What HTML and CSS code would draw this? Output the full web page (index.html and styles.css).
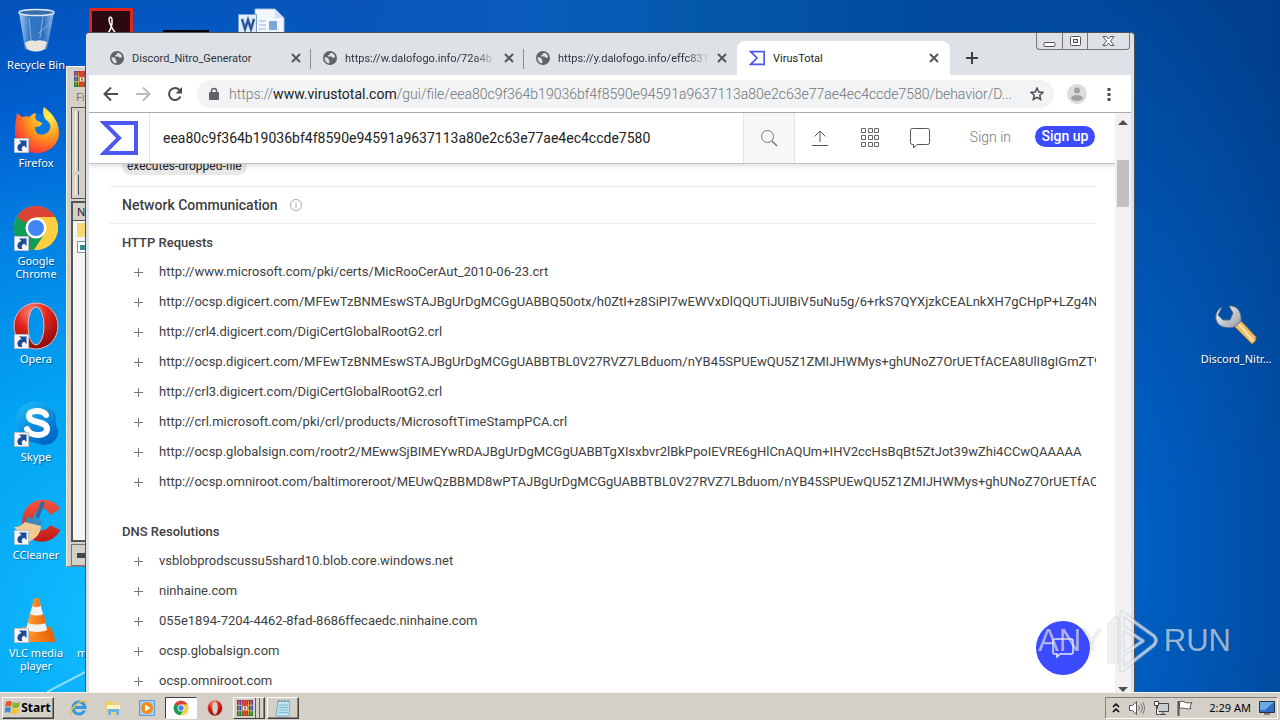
FILE: index.html
```html
<!DOCTYPE html>
<html lang="en">
<head>
<meta charset="utf-8">
<title>VirusTotal</title>
<link rel="stylesheet" href="styles.css">
</head>
<body>
<svg class="defs" aria-hidden="true">
  <defs>
    <linearGradient id="gBin" x1="0" x2="1"><stop offset="0" stop-color="#d6ebfa"/><stop offset=".3" stop-color="#3d7fc6"/><stop offset=".7" stop-color="#3a78c0"/><stop offset="1" stop-color="#b5d6ef"/></linearGradient>
    <radialGradient id="gFox" cx=".75" cy=".2" r="1"><stop offset="0" stop-color="#fff44f"/><stop offset=".45" stop-color="#ff9a1e"/><stop offset=".8" stop-color="#ff4130"/><stop offset="1" stop-color="#e31587"/></radialGradient>
    <radialGradient id="gOpera" cx=".4" cy=".2" r=".9"><stop offset="0" stop-color="#ff8a7a"/><stop offset=".4" stop-color="#e0241c"/><stop offset="1" stop-color="#7d0508"/></radialGradient>
    <linearGradient id="gSkype" x2=".6" y2="1"><stop offset="0" stop-color="#1ec0ff"/><stop offset="1" stop-color="#0068c8"/></linearGradient>
    <linearGradient id="gCc" x2="0" y2="1"><stop offset="0" stop-color="#f0563f"/><stop offset="1" stop-color="#c11a17"/></linearGradient>
    <linearGradient id="gCone" x2="1"><stop offset="0" stop-color="#ffa63a"/><stop offset="1" stop-color="#e85e00"/></linearGradient>
    <linearGradient id="gWrench" x2="1" y2="1"><stop offset="0" stop-color="#fff"/><stop offset="1" stop-color="#8f9aa8"/></linearGradient>
  </defs>
  <symbol id="chrome" viewBox="0 0 48 48">
    <circle cx="24" cy="24" r="22" fill="#ffcd40"/>
    <path d="M24 24 4.950 13A22 22 0 0 1 43.050 13Z" fill="#db4437"/>
    <path d="M4.950 13A22 22 0 0 0 22 46L33 29 24 24Z" fill="#0f9d58"/>
    <path d="M4.950 13 15 30 24 24 14 13Z" fill="#0f9d58"/>
    <path d="M24 13H43.050A22 22 0 0 1 22 46L33.500 29.500Z" fill="#ffcd40"/>
    <path d="M4.950 13A22 22 0 0 1 43.050 13H24A11 11 0 0 0 14 19Z" fill="#db4437"/>
    <circle cx="24" cy="24" r="10.500" fill="#fff"/><circle cx="24" cy="24" r="8" fill="#4285f4"/>
  </symbol>
  <symbol id="opera" viewBox="0 0 48 48">
    <path fill-rule="evenodd" d="M24 1a22 23 0 0 0 0 46 22 23 0 0 0 0-46zM24 5a8 19 0 0 1 0 38 8 19 0 0 1 0-38z" fill="url(#gOpera)" stroke="#f0b8b4" stroke-width="1"/>
  </symbol>
  <symbol id="rar" viewBox="0 0 20 20">
    <path fill="#7a2f86" d="M0 0h20v6H0z"/><path fill="#2c4aa8" d="M0 7h20v6H0z"/><path fill="#1c7a34" d="M0 14h20v6H0z"/>
    <path fill="#d8442c" d="M7 0h6v20H7z"/><path fill="#e8b83c" d="M2 1h1v18H2zM17 1h1v18h-1zM5 1h1v18H5zM14 1h1v18h-1z"/>
    <path fill="#fff3c8" d="M7 8h6v5H7z"/><path fill="#7b4a12" d="M9 9h2v3H9z"/>
  </symbol>
  <symbol id="globe" viewBox="0 0 14 14">
    <circle cx="7" cy="7" r="7" fill="#5f6368"/>
    <path fill="#dee1e6" d="M8.500 1.800c-1 .5-2 .6-2 1.600 0 .8-1.500.3-1.500 1.500 0 .8 1.500.4 3 .5 1.300 0 1 1.400 2.200 1.400 1 0 1.200-.8 2-.8A5.500 5.500 0 0 0 8.500 1.800zM1.500 6.300C2.500 6.500 4 6.400 5 7c1.200.7 0 1.600 1 2.200 1 .5.900 1.300.2 2.100-.3.500-.1 1 .3 1.200A5.600 5.600 0 0 1 1.500 6.300z"/>
  </symbol>
  <symbol id="sigma" viewBox="0 0 38 34"><path d="M4 2H36V32H4L19 17Z" fill="none" stroke="#4d58f0" stroke-width="4"/></symbol>
  <symbol id="x" viewBox="0 0 10 10"><path d="M1 1 9 9M9 1 1 9" stroke="#54585c" stroke-width="2" fill="none"/></symbol>
  <symbol id="arrow" viewBox="0 0 15 15">
    <path d="M.500.500h14v14H.500z" fill="#f4f6f8" stroke="#b9c0c8"/>
    <path d="M5 2.500h7.500V10l-2.300-2.300C8 8.500 7 10.500 8.500 13H5C2 10 3.500 6 7.500 5Z" fill="#1d4b95"/>
  </symbol>
</svg>

<main class="desktop">
  <div class="icons">
    <div class="icon c1 r1">
      <svg width="48" height="48" viewBox="0 0 48 48"><path d="M7 4 13 41Q24 47 35 41L42 4Z" fill="url(#gBin)" opacity=".8"/><ellipse cx="24.500" cy="4.500" rx="17.500" ry="3" fill="#3a6dab" stroke="#dcebf6" stroke-width="1.500"/><path d="M13 35q5-4 10-2 6-2 12 1l-2 7q-9 5-18 0z" fill="#e9e6df"/><path d="M17 10l2 22M31 8l-3 22M38 15 26 26" stroke="#a5cbe9" stroke-width="1" fill="none" opacity=".7"/></svg>
      <span>Recycle Bin</span>
    </div>
    <div class="icon c1 r2">
      <svg width="48" height="48" viewBox="0 0 48 48"><circle cx="25" cy="25" r="17" fill="#0a78e0"/><path d="M32 1c5 4 15 12 15 26a22 20 0 0 1-44 0C3 18 4 12 5 7l5 4c3-1 6-1 8 0 2-3 4-4 6-4-1 3-1 5 0 7l6 3c0 3-4 4-7 4 0 7 5 9 10 7 7-3 7-11 1-14-3-5-4-9-2-13z" fill="url(#gFox)"/></svg>
      <svg class="badge" width="15" height="15"><use href="#arrow"/></svg>
      <span>Firefox</span>
    </div>
    <div class="icon c1 r3"><svg width="48" height="48"><use href="#chrome"/></svg><svg class="badge" width="15" height="15"><use href="#arrow"/></svg><span>Google Chrome</span></div>
    <div class="icon c1 r4"><svg width="48" height="48"><use href="#opera"/></svg><svg class="badge" width="15" height="15"><use href="#arrow"/></svg><span>Opera</span></div>
    <div class="icon c1 r5">
      <svg width="48" height="48" viewBox="0 0 48 48"><path d="M15 4C22-1 34 2 39 9c6 2 5 10 5 16 4 6 2 14-4 18-6 3-12 2-16 0C12 42 6 34 6 26 2 16 6 7 15 4z" fill="url(#gSkype)"/><path d="M34 15c-2-5-17-6-17 1 0 8 18 4 18 13 0 8-17 8-20 0" fill="none" stroke="#fff" stroke-width="6" stroke-linecap="round"/></svg>
      <svg class="badge" width="15" height="15"><use href="#arrow"/></svg>
      <span>Skype</span>
    </div>
    <div class="icon c1 r6">
      <svg width="48" height="48" viewBox="0 0 48 48"><path d="M48 11C42 0 26-1 17 7c-9 9-9 24 0 32s25 6 31-7l-10-5c-3 7-13 7-16 1s1-16 7-17 7 2 9 6z" fill="url(#gCc)"/><path d="M31 4 25 20" stroke="#2e6da4" stroke-width="4"/><path d="M15 19l15 3-1 6-16-4z" fill="#3b87c2"/><path d="M13 24l16 4c0 7-5 13-13 16L2 29c5 0 8-2 11-5z" fill="#f1cb92"/></svg>
      <svg class="badge" width="15" height="15"><use href="#arrow"/></svg>
      <span>CCleaner</span>
    </div>
    <div class="icon c1 r7">
      <svg width="48" height="48" viewBox="0 0 48 48"><path d="M10 31h29l5 15H4z" fill="url(#gCone)"/><path d="M22 3q2.500-2 5 0l9 34q-12 6-23 0z" fill="#f4f2ee"/><path d="M22 3q2.500-2 5 0l2 7q-4.500 2-9 0zM18 18q7 3 13.500 0l2.500 9q-9 3-18.500 0zM14 34q11 4 22 0l1 4q-12 6-24 0z" fill="url(#gCone)"/></svg>
      <svg class="badge" width="15" height="15"><use href="#arrow"/></svg>
      <span>VLC media player</span>
    </div>
    <div class="icon c2 r1"><svg width="44" height="48" viewBox="0 0 44 48"><path d="M1.500 1.500h41v45h-41z" fill="#2a0a10" stroke="#e1251b" stroke-width="3"/><path d="M17 28q7-8 6-17-2-4-3 0 0 6 8 16" fill="none" stroke="#fff" stroke-width="1.500"/></svg></div>
    <div class="icon c3 r1 low"><svg width="46" height="20"><path d="M0 0h46v20H0z" fill="#000"/></svg></div>
    <div class="icon c4 r1">
      <svg width="48" height="48" viewBox="0 0 48 48"><path d="M18 1h20l9 9v37H18z" fill="#f2f7fd" stroke="#9dbbe0"/><path d="M38 1v9h9" fill="#cfe0f4"/><path d="M22 13h7M22 17h7M22 21h7" stroke="#9bb4d4"/><path d="M32 13h8v9h-8z" fill="#7da7dc"/><path d="M1.500 6.500h18v19h-18z" fill="#dfeafa" stroke="#7f9fd0"/><path d="M5 11l3 10 3-9 3 9 3-10" fill="none" stroke="#2b579a" stroke-width="2.500"/></svg>
    </div>
    <div class="icon c2 r7 start"><svg width="48" height="48"></svg><span>m</span></div>
    <div class="icon c6 r4">
      <svg width="48" height="48" viewBox="0 0 48 48"><path d="M22 24l7-5 15 16q1 4-4 7z" fill="#e9bd6a" stroke="#a87830"/><path d="M27 22l14 17" stroke="#ffe2a0" stroke-width="2"/><path d="M10 5C1 10 2 23 12 25c4 1 7 1 10 0l7-6C30 10 25 3 17 4l4 7-3 7-7 0-5-5z" fill="url(#gWrench)" stroke="#5f6b7a"/></svg>
      <span>Discord_Nitr…</span>
    </div>
  </div>

  <section class="rarwin">
    <svg class="rar-icon" width="20" height="16"><use href="#rar"/></svg>
    <div class="rar-menu">Fil</div>
    <div class="rar-tools"><i></i><i></i></div>
    <div class="rar-list">
      <div class="rar-head">N</div>
      <svg width="16" height="36" viewBox="0 0 16 36"><path d="M4 2h10v14H4z" fill="#f3d873"/><path d="M4.500 20.500h11v11h-11z" fill="#fff" stroke="#6f97b5"/><path d="M7 24h5v5H7z" fill="#3a8a8c"/></svg>
    </div>
    <div class="rar-status"><i></i></div>
  </section>

  <section class="browser">
    <div class="tabstrip">
      <div class="tabs">
        <div class="tab"><svg width="14" height="14"><use href="#globe"/></svg><span>Discord_Nitro_Generator</span><button aria-label="Close tab"><svg width="10" height="10"><use href="#x"/></svg></button></div>
        <div class="tab"><svg width="14" height="14"><use href="#globe"/></svg><span class="fade">https://w.dalofogo.info/72a4b</span><button aria-label="Close tab"><svg width="10" height="10"><use href="#x"/></svg></button></div>
        <div class="tab last"><svg width="14" height="14"><use href="#globe"/></svg><span class="fade">https://y.dalofogo.info/effc831</span><button aria-label="Close tab"><svg width="10" height="10"><use href="#x"/></svg></button></div>
        <div class="tab active"><svg width="16" height="16"><use href="#sigma"/></svg><span>VirusTotal</span><button aria-label="Close tab"><svg width="10" height="10"><use href="#x"/></svg></button></div>
        <button class="newtab" aria-label="New tab"><svg width="12" height="12" viewBox="0 0 12 12"><path d="M6 0v12M0 6h12" stroke="#3c4043" stroke-width="2"/></svg></button>
      </div>
      <div class="winctl">
        <button aria-label="Minimize"><svg width="13" height="16" viewBox="0 0 13 16"><rect x="1" y="9.500" width="11" height="4" rx="1" fill="#fff" stroke="#555"/></svg></button>
        <button aria-label="Maximize"><svg width="13" height="16" viewBox="0 0 13 16"><rect x="1.500" y="3.500" width="10" height="9" rx="1" fill="#fff" stroke="#555"/><rect x="4.500" y="6.500" width="4" height="3" fill="#dee1e6" stroke="#555"/></svg></button>
        <button class="wide" aria-label="Close"><svg width="13" height="16" viewBox="0 0 13 16"><path d="M1 3.500h3.500l2 2.500 2-2.500H12L8.500 8l3.500 4.500H8.500l-2-2.500-2 2.500H1L4.500 8z" fill="#fff" stroke="#555"/></svg></button>
      </div>
    </div>

    <div class="toolbar">
      <button aria-label="Back"><svg width="16" height="16" viewBox="0 0 16 16"><path d="M15 8H2M8 1.500 1.500 8 8 14.500" fill="none" stroke="#4a4e52" stroke-width="2"/></svg></button>
      <button aria-label="Forward"><svg width="16" height="16" viewBox="0 0 16 16"><path d="M1 8h13M8 1.500 14.500 8 8 14.500" fill="none" stroke="#b8babd" stroke-width="2"/></svg></button>
      <button aria-label="Reload"><svg width="16" height="16" viewBox="0 0 16 16"><path d="M13.500 10.500A6 6 0 1 1 12.500 4" fill="none" stroke="#4a4e52" stroke-width="2"/><path d="M15 1v6.500H8.500z" fill="#4a4e52"/></svg></button>
      <div class="omnibox">
        <svg width="10" height="14" viewBox="0 0 10 14"><path d="M1 5h8q1 0 1 1v6q0 1-1 1H1q-1 0-1-1V6q0-1 1-1z" fill="#5f6368"/><path d="M2.500 5.500V4a2.500 2.500 0 0 1 5 0v1.500" fill="none" stroke="#5f6368" stroke-width="1.500"/></svg>
        <div class="url" role="textbox" aria-label="Address">https://<b>www.virustotal.com</b>/gui/file/eea80c9f364b19036bf4f8590e94591a9637113a80e2c63e77ae4ec4ccde7580/behavior/D...</div>
        <svg width="14" height="14" viewBox="0 0 14 14"><path d="M7 1l1.800 4 4.200.4-3.200 2.900.9 4.200L7 10.300l-3.700 2.200.9-4.200L1 5.400 5.200 5z" fill="none" stroke="#4a4e52" stroke-width="1.500"/></svg>
      </div>
      <button class="avatar" aria-label="Profile"><svg width="20" height="20" viewBox="0 0 20 20"><circle cx="10" cy="10" r="10" fill="#dcdcdc"/><circle cx="10" cy="6.500" r="3" fill="#a0a0a0"/><ellipse cx="10" cy="14" rx="6" ry="3" fill="#a0a0a0"/></svg></button>
      <button aria-label="Menu"><svg width="4" height="14" viewBox="0 0 4 14"><path d="M.500 1h3v3h-3zM.500 6h3v3h-3zM.500 11h3v3h-3z" fill="#4a4e52"/></svg></button>
    </div>

    <div class="viewport">
      <div class="page">
        <header class="vt-head">
          <a class="vt-logo" href="#" aria-label="VirusTotal"><svg width="38" height="34"><use href="#sigma"/></svg></a>
          <input class="vt-search" type="text" aria-label="Search" value="eea80c9f364b19036bf4f8590e94591a9637113a80e2c63e77ae4ec4ccde7580">
          <button class="vt-go" aria-label="Search"><svg width="18" height="18" viewBox="0 0 18 18"><circle cx="7.500" cy="7.500" r="6" fill="none" stroke="#777"/><path d="M12 12l5 5" stroke="#777" stroke-width="1.500"/></svg></button>
          <nav class="vt-nav">
            <button aria-label="Upload"><svg width="16" height="16" viewBox="0 0 16 16"><path d="M8 12V1.500M2.500 6.500 8 1l5.500 5.500M0 15.500h16" fill="none" stroke="#555"/></svg></button>
            <button aria-label="Apps"><svg width="20" height="20" viewBox="0 0 20 20"><path d="M1.500.500h4v4h-4zM8.500.500h4v4h-4zM14.500.500h4v4h-4zM1.500 7.500h4v4h-4zM8.500 7.500h4v4h-4zM14.500 7.500h4v4h-4zM1.500 14.500h4v4h-4zM8.500 14.500h4v4h-4zM14.500 14.500h4v4h-4z" fill="none" stroke="#666"/></svg></button>
            <button aria-label="Comments"><svg width="20" height="20" viewBox="0 0 20 20"><path d="M2.500.500h15q2 0 2 2v12q0 2-2 2H7L3.500 20v-3.500H2.500q-2 0-2-2v-12q0-2 2-2z" fill="none" stroke="#555"/></svg></button>
          </nav>
          <a class="signin" href="#">Sign in</a>
          <a class="signup" href="#">Sign up</a>
        </header>
        <div class="vt-body">
          <span class="chip">executes-dropped-file</span>
          <h2>Network Communication <svg width="12" height="12" viewBox="0 0 12 12"><circle cx="6" cy="6" r="5.500" fill="none" stroke="#aaa"/><path d="M6 3v1M6 5v4" stroke="#aaa"/></svg></h2>
          <h3>HTTP Requests</h3>
          <ul>
            <li>http://www.microsoft.com/pki/certs/MicRooCerAut_2010-06-23.crt</li>
            <li>http://ocsp.digicert.com/MFEwTzBNMEswSTAJBgUrDgMCGgUABBQ50otx/h0ZtI+z8SiPI7wEWVxDlQQUTiJUIBiV5uNu5g/6+rkS7QYXjzkCEALnkXH7gCHpP+LZg4N</li>
            <li>http://crl4.digicert.com/DigiCertGlobalRootG2.crl</li>
            <li>http://ocsp.digicert.com/MFEwTzBNMEswSTAJBgUrDgMCGgUABBTBL0V27RVZ7LBduom/nYB45SPUEwQU5Z1ZMIJHWMys+ghUNoZ7OrUETfACEA8UlI8gIGmZT9X</li>
            <li>http://crl3.digicert.com/DigiCertGlobalRootG2.crl</li>
            <li>http://crl.microsoft.com/pki/crl/products/MicrosoftTimeStampPCA.crl</li>
            <li>http://ocsp.globalsign.com/rootr2/MEwwSjBIMEYwRDAJBgUrDgMCGgUABBTgXIsxbvr2lBkPpoIEVRE6gHlCnAQUm+IHV2ccHsBqBt5ZtJot39wZhi4CCwQAAAAA</li>
            <li>http://ocsp.omniroot.com/baltimoreroot/MEUwQzBBMD8wPTAJBgUrDgMCGgUABBTBL0V27RVZ7LBduom/nYB45SPUEwQU5Z1ZMIJHWMys+ghUNoZ7OrUETfAC</li>
          </ul>
          <h3>DNS Resolutions</h3>
          <ul>
            <li>vsblobprodscussu5shard10.blob.core.windows.net</li>
            <li>ninhaine.com</li>
            <li>055e1894-7204-4462-8fad-8686ffecaedc.ninhaine.com</li>
            <li>ocsp.globalsign.com</li>
            <li>ocsp.omniroot.com</li>
          </ul>
        </div>
        <button class="fab" aria-label="Feedback"><svg width="22" height="20" viewBox="0 0 22 20"><path d="M3 1h16q2 0 2 2v11q0 2-2 2H8l-3 3v-3H3q-2 0-2-2V3q0-2 2-2z" fill="none" stroke="#e6e8ff" stroke-width="1.500"/></svg></button>
      </div>
      <div class="scroll">
        <svg width="10" height="5"><path d="M5 0l5 5H0z" fill="#505050"/></svg>
        <i></i>
        <svg width="10" height="5"><path d="M0 0h10L5 5z" fill="#505050"/></svg>
      </div>
    </div>
  </section>

  <div class="watermark">
    <span>ANY</span>
    <svg width="52" height="62" viewBox="0 0 52 62"><g fill="none" stroke-linejoin="round"><path d="M3 54V15L9 9V54M15 60V3L47 26q4 4 0 9L15 60V45L36 31 15 17" stroke="#8a9099" stroke-opacity=".25" stroke-width="5"/><path d="M3 54V15L9 9V54M15 60V3L47 26q4 4 0 9L15 60V45L36 31 15 17" stroke="#fff" stroke-opacity=".6" stroke-width="3"/></g></svg>
    <span>RUN</span>
  </div>
</main>

<footer class="taskbar">
  <button class="startbtn"><svg width="15" height="15" viewBox="0 0 15 15"><path d="M1 2q3-2 6 0L6 7Q3 5 0 7z" fill="#e8562a"/><path d="M8 2q3 2 7 0l-1 5q-4 2-7 0z" fill="#7ab82e"/><path d="M0 8q3-2 6 0l-1 5q-3-2-5 0z" fill="#3a8ad8"/><path d="M7 8q3 2 7 0l-1 5q-4 2-7 0z" fill="#f5c32a"/></svg>Start</button>
  <div class="quick">
    <button aria-label="Internet Explorer"><svg width="18" height="18" viewBox="0 0 18 18"><path d="M14.500 11.500A6 6 0 1 1 15 8.500H5" fill="none" stroke="#2f9be4" stroke-width="3"/><path d="M1 15C-1 10 12-1 17 3" fill="none" stroke="#f0c040" stroke-width="1.500"/></svg></button>
    <button aria-label="Explorer"><svg width="18" height="18" viewBox="0 0 18 18"><path d="M2 2h6l1 2h7v11H2z" fill="#f0cf6a"/><path d="M3 6h13v4H3z" fill="#fff3bf"/><path d="M4 10h11v6h-3v-3H7v3H4z" fill="#6db3e6"/></svg></button>
    <button aria-label="Media Player"><svg width="18" height="18" viewBox="0 0 18 18"><path d="M1.500 1.500h15v15h-15z" fill="#a9cdee" stroke="#5a9bd4"/><circle cx="9" cy="9" r="6" fill="#f28a1a"/><path d="M7 5.500 12.500 9 7 12.500z" fill="#fff"/></svg></button>
    <button class="pressed" aria-label="Chrome"><svg width="16" height="16"><use href="#chrome"/></svg></button>
    <button aria-label="Opera"><svg width="16" height="16"><use href="#opera"/></svg></button>
    <button class="raised stack" aria-label="WinRAR"><svg width="18" height="16"><use href="#rar"/></svg></button>
    <button class="raised" aria-label="Notepad"><svg width="16" height="18" viewBox="0 0 16 18"><path d="M3 2h12l-1 15H1z" fill="#bfe3ef" stroke="#7fb0c4"/><path d="M4 6h9M4 8.500h9M3.500 11h9M3.500 13.500h9" stroke="#7dbad0"/><path d="M4 1v2M7 1v2M10 1v2M13 1v2" stroke="#6a7a84"/></svg></button>
  </div>
  <div class="tray">
    <svg width="8" height="12" viewBox="0 0 8 12"><path d="M1 5l3-3 3 3M1 10l3-3 3 3" fill="none" stroke="#000" stroke-width="1.500"/></svg>
    <svg width="17" height="16" viewBox="0 0 17 16"><path d="M1.500 5.500h3l4-4v13l-4-4h-3z" fill="#fff" stroke="#555"/><path d="M10.500 5.500q2 2.500 0 5M12.500 3.500q3.500 4.500 0 9M14.500 2q4 6 0 12" fill="none" stroke="#777"/></svg>
    <svg width="16" height="16" viewBox="0 0 16 16"><path d="M4.500 3.500h11v8h-11z" fill="#c9ccd0" stroke="#444"/><path d="M7 14.500h6M10 12v2" stroke="#444"/><path d="M1.500 1.500h4v4h-4zM3.500 6v8.500h3" fill="#fff" stroke="#444"/></svg>
    <svg width="16" height="16" viewBox="0 0 16 16"><path d="M1.500 1v15" stroke="#555" stroke-width="2"/><path d="M2.500 1.500q3-1 6 1 3 1 6.500 0l-2 4 1 2q-3 1-5.500 0-3-1-6 0z" fill="#fff" stroke="#555"/></svg>
    <time>2:29 AM</time>
    <svg width="16" height="14" viewBox="0 0 16 14"><path d="M.500.500h15v11H.500z" fill="#2a6fc4" stroke="#234"/><path d="M1 1h14L6 9H1z" fill="#6ea8e4"/><path d="M5 13h6" stroke="#333"/></svg>
  </div>
</footer>
</body>
</html>
```
FILE: styles.css
```css
* { box-sizing: border-box; }
body { margin: 0; height: 100vh; display: flex; flex-direction: column; overflow: hidden; font: 11px "Noto Sans", sans-serif; color: #222; }
button { border: 0; background: none; padding: 0; font: inherit; color: inherit; display: flex; align-items: center; justify-content: center; }
a { color: inherit; text-decoration: none; }
svg { display: block; flex: none; }
.defs { position: absolute; width: 0; height: 0; }

/* Desktop */
.desktop {
  flex: 1; position: relative; overflow: hidden; min-height: 0;
  background:
    linear-gradient(to bottom right, transparent 46%, #d8f4ffcc 50%, transparent 54%) 47px 100% / 44px 23px no-repeat,
    radial-gradient(ellipse 45% 100% at 8% 90%, #12bcff 0, #02a2f2 35%, #0280e4 58%, #0060cf 75%, transparent 100%),
    radial-gradient(ellipse 22% 90% at 86% 80%, #0064cc 0, transparent 100%),
    linear-gradient(90deg, #0448ae, #0a5cbc 42%, #0458aa 55%, #004a9e 72%, #003f8c);
}
.icons { display: grid; grid-template-columns: repeat(4, 72px) 1fr 80px; grid-auto-rows: 98px; column-gap: 3px; padding-right: 4px; }
.icon { position: relative; display: flex; flex-direction: column; align-items: center; gap: 2px; padding-top: 8px; color: #fff; line-height: 13px; text-align: center; text-shadow: 1px 1px 1px #0006; }
.icon.low { padding-top: 30px; }
.icon.start { align-items: flex-start; padding-left: 2px; }
.badge { position: absolute; left: 14px; top: 40px; }
.c1 { grid-column: 1; } .c2 { grid-column: 2; } .c3 { grid-column: 3; } .c4 { grid-column: 4; } .c6 { grid-column: 6; }
.r1 { grid-row: 1; } .r2 { grid-row: 2; } .r3 { grid-row: 3; } .r4 { grid-row: 4; } .r5 { grid-row: 5; } .r6 { grid-row: 6; } .r7 { grid-row: 7; }

/* Archive window */
.rarwin { position: absolute; left: 66px; top: 66px; width: 30px; height: 501px; background: #d4d0c8; border: 1px solid #808080; border-top-color: #f6f4f0; border-left-color: #f6f4f0; display: flex; flex-direction: column; padding: 4px 0 0 4px; overflow: hidden; }
.rar-menu { padding-left: 5px; line-height: 20px; color: #777; }
.rar-tools { display: flex; flex-direction: column; gap: 4px; height: 92px; padding: 3px; border: 1px solid #555; margin-bottom: 2px; }
.rar-tools i { flex: 1; width: 4px; border-left: 1px solid #fff; border-right: 1px solid #555; }
.rar-tools i:first-child { flex: 3; }
.rar-icon { margin-left: 1px; }
.rar-list { flex: 1; background: #f4f4f4; border: 2px solid #555; }
.rar-head { background: #d4d0c8; padding-left: 4px; line-height: 17px; border-bottom: 1px solid #555; }
.rar-status { display: flex; align-items: center; height: 22px; padding-left: 5px; border: 1px solid #777; margin-top: 2px; }
.rar-status i { width: 16px; height: 5px; background: #444; }

/* Browser window */
.browser { position: absolute; left: 85px; right: 145px; top: 32px; bottom: 0; display: flex; flex-direction: column; background: #dee1e6; border: 1px solid #46545f; border-bottom: 0; border-radius: 4px 4px 0 0; padding: 0 3px; }
.tabstrip { display: flex; justify-content: space-between; height: 42px; font-family: Roboto, sans-serif; }
.tabs { display: flex; align-items: flex-end; padding-left: 9px; }
.tab { position: relative; width: 213px; height: 34px; display: flex; align-items: center; gap: 8px; padding: 0 10px 0 12px; color: #30343a; }
.tab span { flex: 1; overflow: hidden; white-space: nowrap; }
.tab .fade { -webkit-mask-image: linear-gradient(90deg, #000 85%, transparent); mask-image: linear-gradient(90deg, #000 85%, transparent); }
.tab::after { content: ""; position: absolute; right: 0; top: 8px; height: 20px; border-right: 1px solid #8a8d92; }
.tab.last::after, .tab.active::after { display: none; }
.tab.active { background: #fff; border-radius: 8px 8px 0 0; padding-right: 11px; color: #222; }
.newtab { width: 44px; height: 34px; }
.winctl { display: flex; height: 17px; border: 1px solid #777; border-top: 0; border-radius: 0 0 4px 4px; margin-right: 1px; }
.winctl button { width: 25px; }
.winctl button + button { border-left: 1px solid #777; }
.winctl .wide { width: 42px; }
.toolbar { display: flex; align-items: center; height: 38px; gap: 16px; padding: 0 20px 0 14px; background: #fff; border-bottom: 1px solid #aaa; }
.omnibox { flex: 1; min-width: 0; display: flex; align-items: center; gap: 10px; height: 28px; padding: 0 10px 0 12px; border-radius: 14px; background: #f1f3f4; margin-left: -2px; }
.url { flex: 1; min-width: 0; overflow: hidden; white-space: nowrap; font: 300 14px Roboto, sans-serif; color: #70757a; }
.url b { font-weight: 400; color: #202124; }
.avatar { margin: 0 4px 0 -3px; }

/* Page */
.viewport { flex: 1; min-height: 0; display: flex; background: #fff; }
.page { position: relative; flex: 1; min-width: 0; overflow: hidden; font: 13px/30px Roboto, sans-serif; }
.vt-head { position: relative; z-index: 1; display: flex; align-items: center; height: 51px; background: #fff; border-bottom: 1px solid #c4c4c4; box-shadow: 0 2px 5px #0002; font-size: 14px; }
.vt-logo { display: flex; align-items: center; align-self: stretch; width: 61px; padding-left: 11px; border-right: 1px solid #e4e4e4; }
.vt-search { flex: 1; min-width: 0; border: 0; outline: 0; padding: 0 13px; font: 14px Roboto, sans-serif; color: #222; background: none; }
.vt-go { align-self: stretch; width: 52px; background: #f7f7f7; border: 1px solid #e4e4e4; border-width: 0 1px; }
.vt-nav { display: flex; }
.vt-nav button { width: 50px; height: 50px; }
.signin { margin-bottom: 3px; padding: 0 24px 0 25px; font-weight: 300; color: #777; }
.signup { width: 60px; height: 21px; margin: 0 20px 3px 0; border-radius: 11px; background: #3b4bff; color: #fff; line-height: 21px; text-align: center; font-weight: 500; }
.vt-body { padding: 0 19px 0 20px; color: #404040; }
.chip { display: block; width: max-content; margin: -6px 0 11px 13px; padding: 0 5px; border-radius: 9px; background: #e8e8e8; font-size: 12px; line-height: 17px; color: #222; }
h2 { display: flex; align-items: center; gap: 12px; height: 38px; margin: 0 0 5px; padding-left: 13px; border: 1px solid #ececec; border-width: 1px 0; font-size: 14px; font-weight: 500; }
h3 { margin: 0; padding-left: 13px; font-size: 13px; font-weight: 500; line-height: 28px; }
ul { list-style: none; margin: 0 0 21px; padding: 0; }
li { position: relative; padding-left: 50px; overflow: hidden; white-space: nowrap; }
li::before, li::after { content: ""; position: absolute; background: #777; }
li::before { left: 25px; top: 15px; width: 9px; height: 1px; }
li::after { left: 29px; top: 11px; width: 1px; height: 9px; }
.fab { position: absolute; right: 25px; bottom: 17px; width: 54px; height: 54px; border-radius: 50%; background: #3b4bff; }
.scroll { width: 16px; background: #f1f1f1; display: flex; flex-direction: column; align-items: center; padding-top: 7px; }
.scroll i { width: 12px; height: 47px; margin: 35px 0 auto; background: #c1c1c1; }

/* Watermark */
.watermark { position: absolute; right: 49px; bottom: 20px; display: flex; align-items: center; gap: 5px; font: 31px/62px "Liberation Sans", sans-serif; color: #ffffff99; text-shadow: 0 0 2px #0003; pointer-events: none; }

/* Taskbar */
.taskbar { display: flex; align-items: center; height: 28px; padding: 2px 2px 0; background: #d4d0c8; border-top: 1px solid #f4f2ee; }
.startbtn, .raised, .pressed { border: 1px solid; border-color: #fff #404040 #404040 #fff; box-shadow: inset -1px -1px #808080; }
.startbtn { width: 52px; height: 22px; gap: 1px; font-size: 12px; font-weight: 700; color: #000; }
.quick { display: flex; align-items: center; gap: 2px; padding-left: 9px; }
.quick button { width: 32px; height: 22px; }
.quick .pressed { background: #fff; border-color: #404040 #fff #fff #404040; box-shadow: none; }
.quick .stack { box-shadow: inset -1px 0 #808080, inset -4px 0 #d4d0c8, inset -5px 0 #606060, inset -8px 0 #d4d0c8, inset -9px 0 #606060; padding-right: 8px; }
.tray { margin-left: auto; display: flex; align-items: center; gap: 8px; height: 22px; padding: 0 2px 0 6px; border: 1px solid; border-color: #808080 #fff #fff #808080; color: #000; }
.tray time { padding-left: 8px; }
```
